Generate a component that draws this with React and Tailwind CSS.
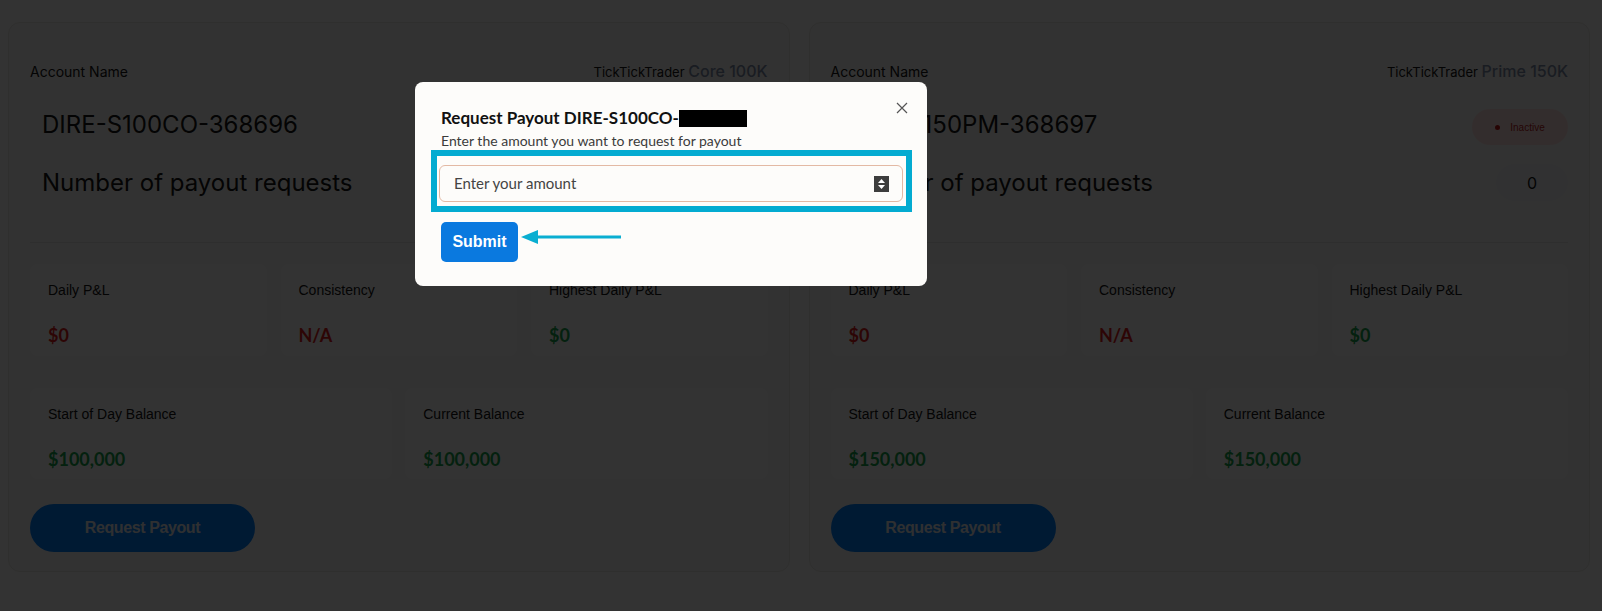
// App.jsx — payout accounts with "Request Payout" modal open

const ACCOUNTS = [
  {
    id: 'DIRE-S100CO-368696',
    plan: 'Core 100K',
    status: null,
    daily: '$0',
    consistency: 'N/A',
    highest: '$0',
    start: '$100,000',
    current: '$100,000',
  },
  {
    id: 'DIRE-S150PM-368697',
    plan: 'Prime 150K',
    status: 'Inactive',
    daily: '$0',
    consistency: 'N/A',
    highest: '$0',
    start: '$150,000',
    current: '$150,000',
  },
]

const geo = { fontFamily: 'Inter, "Liberation Sans", sans-serif' }
const label = { fontFamily: '"Liberation Sans", Arial, sans-serif' }
const lato = { fontFamily: 'Lato, "Liberation Sans", sans-serif' }

function Stat({ title, value, tone, big }) {
  return (
    <div className={`rounded-lg bg-white px-[18px] pt-[16px] ${big ? 'h-[91px]' : 'h-[92px]'}`}>
      <p className="text-sm leading-5 text-[#141414]" style={label}>{title}</p>
      <p
        className={`mt-[21px] text-[18px] font-bold leading-7 ${tone === 'red' ? 'text-[#e11d1d]' : 'text-[#16a34a]'}`}
        style={lato}
      >
        {value}
      </p>
    </div>
  )
}

function AccountCard({ acc }) {
  return (
    <div className="rounded-xl border border-[#e9e8e6] bg-[#fbfaf8] px-[21px] pt-[38px] pb-[19px]">
      {/* ── Cabecera ── */}
      <div className="flex h-5 items-baseline justify-between">
        <span className="text-sm leading-5 text-[#141414]" style={geo}>Account Name</span>
        <span className="text-[13px] leading-5 text-[#141414]" style={geo}>
          TickTickTrader <span className="text-[16px] font-medium leading-5 text-[#7f8ea8]">{acc.plan}</span>
        </span>
      </div>

      <div className="mt-[26px] flex h-[36px] items-center justify-between">
        <span className="pl-3 text-[24px] text-[#141414]" style={geo}>{acc.id}</span>
        {acc.status && (
          <span className="mt-[4px] flex h-[36px] w-[96px] items-center justify-center gap-[10px] rounded-full bg-[#fee2e2] text-[10px] text-[#b91c1c]" style={label}>
            <span className="h-[5px] w-[5px] rounded-full bg-[#c01818]" />
            {acc.status}
          </span>
        )}
      </div>

      <div className="mt-[21px] flex h-[37px] items-center justify-between">
        <span className="pl-3 text-[24px] text-[#141414]" style={geo}>Number of payout requests</span>
        {acc.status && (
          <span className="flex h-[37px] w-[72px] items-center justify-center rounded-full bg-[#f3f5f9] text-base text-[#141414]" style={geo}>
            0
          </span>
        )}
      </div>

      <div className="mt-[41px] border-t border-[#e6e5e3]" />

      {/* ── Métricas ── */}
      <div className="mt-[21px] grid grid-cols-3 gap-[14px]">
        <Stat title="Daily P&L" value={acc.daily} tone="red" />
        <Stat title="Consistency" value={acc.consistency} tone="red" />
        <Stat title="Highest Daily P&L" value={acc.highest} tone="green" />
      </div>
      <div className="mt-[32px] grid grid-cols-2 gap-[13px]">
        <Stat title="Start of Day Balance" value={acc.start} tone="green" big />
        <Stat title="Current Balance" value={acc.current} tone="green" big />
      </div>

      <button
        className="mt-[25px] h-[48px] w-[225px] rounded-full bg-[#0080ff] text-base font-bold tracking-tight text-[#e8eef6]"
        style={label}
      >
        Request Payout
      </button>
    </div>
  )
}

function PayoutModal() {
  return (
    <div className="fixed left-[415px] top-[82px] w-[512px] rounded-lg bg-[#fdfcfa] pl-[26px] pr-[15px] pt-[24px] pb-[24px]" style={lato}>
      <button className="absolute right-[19px] top-[20px] text-[#555]" aria-label="close">
        <svg width="12" height="12" viewBox="0 0 12 12" fill="none" stroke="currentColor" strokeWidth="1.2">
          <path d="M1 1l10 10M11 1L1 11" />
        </svg>
      </button>

      <h2 className="flex items-center text-[17px] font-bold leading-6 text-[#111]">
        Request Payout DIRE-S100CO-
        <span className="inline-block h-[17px] w-[68px] bg-black" />
      </h2>
      <p className="mt-[1px] text-sm leading-5 text-[#3b3b3b]">Enter the amount you want to request for payout</p>

      {/* recuadro de resaltado */}
      <div className="-ml-[10px] mt-[-1px] border-[6px] border-[#04abd1] pl-[2px] pr-[3px] pt-[9px] pb-[4px]">
        <div className="flex h-[37px] items-center justify-between rounded-md border border-[#e3b9a4] bg-[#fdfcfa] pl-[14px] pr-[13px]">
          <span className="text-[15px] text-[#444]">Enter your amount</span>
          <span className="flex h-[16px] w-[15px] flex-col items-center justify-center gap-[2px] bg-[#3d3d3d]">
            <svg width="7" height="4" viewBox="0 0 7 4"><path d="M0 4L3.5 0 7 4z" fill="#fff" /></svg>
            <svg width="7" height="4" viewBox="0 0 7 4"><path d="M0 0L3.5 4 7 0z" fill="#fff" /></svg>
          </span>
        </div>
      </div>

      <div className="relative mt-[10px] flex items-center">
        <button className="h-[40px] w-[77px] rounded-[5px] bg-[#0a79df] text-base font-bold text-white" style={label}>
          Submit
        </button>
        <svg className="absolute left-[79px] top-[7px]" width="102" height="16" viewBox="0 0 102 16">
          <path d="M16 8H101" stroke="#0aaed1" strokeWidth="3" />
          <path d="M1 8L18 1V15z" fill="#0aaed1" />
        </svg>
      </div>
    </div>
  )
}

export default function App() {
  return (
    <div className="min-h-screen bg-white pl-[8px] pr-[12px] pt-[22px]">
      <div className="grid grid-cols-2 gap-[19px]">
        {ACCOUNTS.map((a) => <AccountCard key={a.id} acc={a} />)}
      </div>

      {/* Capa de oscurecimiento */}
      <div className="fixed inset-0 bg-black/80" />
      <PayoutModal />
    </div>
  )
}
